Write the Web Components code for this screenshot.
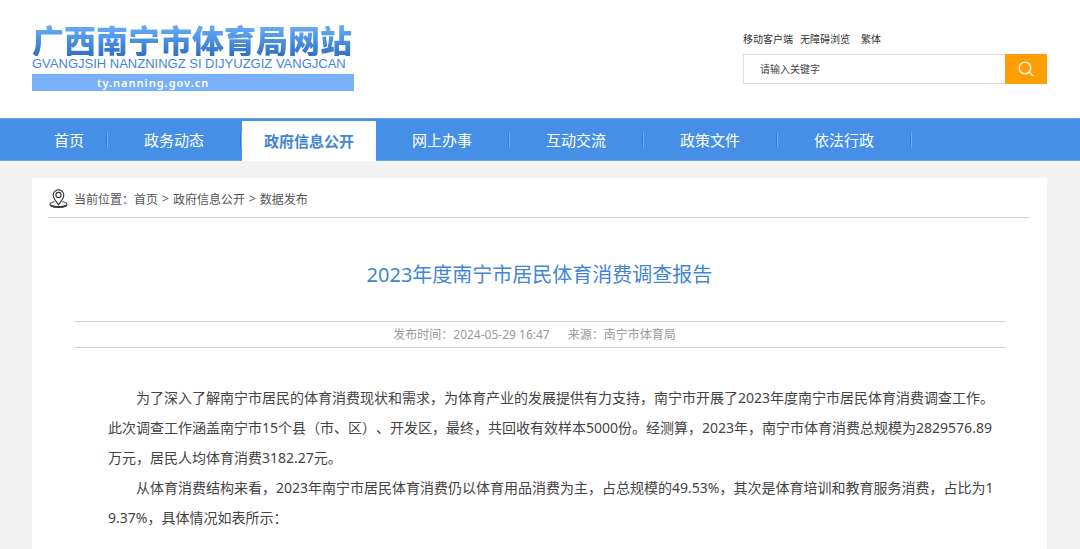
<!DOCTYPE html>
<html lang="zh-CN">
<head>
<meta charset="utf-8">
<meta name="viewport" content="width=device-width, initial-scale=1">
<title>2023年度南宁市居民体育消费调查报告</title>
<style>
  html { background: #f4f4f4; }
  body {
    display: flex;
    flex-direction: column;
    min-height: 100vh;
    margin: 0;
    font-family: "Noto Sans", "Noto Sans CJK SC", sans-serif;
    color: #444;
    --blue: #4590e6;
    --gutter: 32px;
  }
  content-panel { flex: 1; }
</style>
</head>
<body>
<site-header>
  <site-logo slot="logo"></site-logo>
  <a slot="link" href="#app">移动客户端</a>
  <a slot="link" href="#access">无障碍浏览</a>
  <a slot="link" href="#hant">繁体</a>
  <search-box slot="search"></search-box>
</site-header>
<site-nav>
  <nav-item href="#home" compact>首页</nav-item>
  <nav-item href="#news">政务动态</nav-item>
  <nav-item href="#open" active>政府信息公开</nav-item>
  <nav-item href="#service">网上办事</nav-item>
  <nav-item href="#talk">互动交流</nav-item>
  <nav-item href="#policy">政策文件</nav-item>
  <nav-item href="#law">依法行政</nav-item>
</site-nav>
<content-panel>
  <bread-crumb slot="crumb">
    <a href="#home">首页</a>
    <a href="#open">政府信息公开</a>
    <a href="#data">数据发布</a>
  </bread-crumb>
  <news-article>
    <span slot="title">2023年度南宁市居民体育消费调查报告</span>
    <span slot="date">发布时间：2024-05-29 16:47</span>
    <span slot="source">来源：南宁市体育局</span>
    <p>为了深入了解南宁市居民的体育消费现状和需求，为体育产业的发展提供有力支持，南宁市开展了2023年度南宁市居民体育消费调查工作。此次调查工作涵盖南宁市15个县（市、区）、开发区，最终，共回收有效样本5000份。经测算，2023年，南宁市体育消费总规模为2829576.89万元，居民人均体育消费3182.27元。</p>
    <p>从体育消费结构来看，2023年南宁市居民体育消费仍以体育用品消费为主，占总规模的49.53%，其次是体育培训和教育服务消费，占比为19.37%，具体情况如表所示：</p>
  </news-article>
</content-panel>

<script>
const define = (name, html, setup) => {
  const template = document.createElement('template');
  template.innerHTML = html;
  customElements.define(name, class extends HTMLElement {
    constructor() {
      super();
      this.attachShadow({ mode: 'open' }).append(template.content.cloneNode(true));
    }
    connectedCallback() {
      if (setup) setup(this, this.shadowRoot);
    }
  });
};

define('site-logo', `
<style>
  :host { display: inline-block; min-width: 322px; }
  a { display: block; text-decoration: none; white-space: nowrap; }
  .name {
    display: block; font: 900 32px/34px "Noto Sans CJK SC", sans-serif;
    background: linear-gradient(#62a8f6 20%, #3273c8 95%);
    -webkit-background-clip: text; background-clip: text; color: transparent;
  }
  .latin { display: block; font: 13px/16px "Liberation Sans", sans-serif; color: #4586d4; }
  .host {
    display: block; margin-top: 2px; padding-left: 65px; background: #78b1f9; color: #fff;
    font: 600 11px/17px "Noto Sans", sans-serif; letter-spacing: 1px;
  }
</style>
<a href="#home">
  <span class="name">广西南宁市体育局网站</span>
  <span class="latin">GVANGJSIH NANZNINGZ SI DIJYUZGIZ VANGJCAN</span>
  <span class="host">ty.nanning.gov.cn</span>
</a>`);

define('site-header', `
<style>
  :host { display: block; background: #fff; }
  header {
    display: flex; justify-content: space-between; align-items: flex-start;
    padding: 22px 33px 27px var(--gutter);
  }
  .tools { width: 304px; padding-top: 9px; }
  .links { display: flex; gap: 7px; font-size: 10px; line-height: 16px; }
  ::slotted(a) { color: #333; text-decoration: none; }
  ::slotted(a:nth-of-type(3)) { margin-left: 4px; }
  ::slotted(search-box) { margin-top: 7px; }
</style>
<header>
  <slot name="logo"></slot>
  <div class="tools">
    <div class="links"><slot name="link"></slot></div>
    <slot name="search"></slot>
  </div>
</header>`);

define('search-box', `
<style>
  :host { display: block; }
  form { display: flex; height: 30px; margin: 0; }
  input {
    flex: 1; min-width: 0; box-sizing: border-box; padding: 0 16px; border: 1px solid #ddd;
    border-right: 0; border-radius: 0; background: #fff; font: inherit; font-size: 10px; color: #444; outline: 0;
  }
  input::placeholder { color: #444; opacity: 1; }
  button {
    display: grid; place-items: center; width: 42px; padding: 0; border: 0; background: #ff9d04;
  }
</style>
<form role="search">
  <input type="search" placeholder="请输入关键字" aria-label="请输入关键字">
  <button type="button" aria-label="搜索">
    <svg width="16" height="16" viewBox="0 0 16 16" fill="none" stroke="#fff3d8" stroke-width="1.5" stroke-linecap="round">
      <circle cx="7" cy="7" r="5.8"/><path d="M11.2 11.2 15 14.8"/>
    </svg>
  </button>
</form>`);

define('site-nav', `
<style>
  :host { display: block; background: var(--blue); }
  nav {
    display: flex; height: 43px; box-sizing: border-box; padding: 0 var(--gutter);
    border-top: 1px solid #6ba6e4; border-bottom: 1px solid #6ba6e4;
  }
</style>
<nav><slot></slot></nav>`);

define('nav-item', `
<style>
  :host { display: flex; align-items: center; width: 134px; }
  :host([compact]) { width: 76px; }
  a { flex: 1; text-align: center; font-size: 15px; line-height: 40px; color: #fff; text-decoration: none; white-space: nowrap; }
  i { width: 1px; height: 14px; background: #3478cb; border-right: 1px solid #73aff2; }
  :host([active]) { margin: 2px 0 -1px; background: #fff; }
  :host([active]) a { font-weight: 700; color: #4285d6; }
  :host([active]) i { display: none; }
</style>
<a><slot></slot></a><i></i>`, (host, root) => {
  root.querySelector('a').href = host.getAttribute('href');
});

define('content-panel', `
<style>
  :host { display: block; margin: 17px 33px 0 var(--gutter); background: #fff; }
  main { padding: 0 17px; }
</style>
<main><slot name="crumb"></slot><slot></slot></main>`);

define('bread-crumb', `
<style>
  :host { display: block; border-bottom: 1px solid #d2d2d2; }
  nav { display: flex; align-items: center; height: 37px; padding-top: 2px; font-size: 12px; color: #555; }
  svg { margin-right: 6px; }
  .trail { display: flex; gap: 4px; }
  a { color: inherit; text-decoration: none; }
</style>
<nav aria-label="当前位置">
  <svg width="19" height="19" viewBox="0 0 19 19" fill="none" stroke="#333" stroke-width="1.1">
    <path d="M9.5 15.8C7.6 12.6 4.2 9.6 4.2 6.2a5.3 5.3 0 0 1 10.6 0c0 3.4-3.4 6.4-5.3 9.6Z"/>
    <circle cx="9.5" cy="6" r="2.6"/>
    <path d="M5.6 12.8C3 13.2 1 14.2 1 15.4c0 1.6 3.8 2.6 8.5 2.6s8.5-1 8.5-2.6c0-1.2-2-2.200-4.600-2.600"/>
    <path stroke-width="1.8" d="M2 16.5c1.5 1.1 4.300 1.500 7.500 1.500s6-.4 7.500-1.500"/>
  </svg><span>当前位置：</span><span class="trail"></span>
</nav>`, (host, root) => {
  const trail = root.querySelector('.trail');
  trail.replaceChildren();
  [...host.querySelectorAll('a')].forEach((link, i) => {
    if (i) {
      const mark = document.createElement('span');
      mark.textContent = '>';
      trail.append(mark);
    }
    trail.append(link.cloneNode(true));
  });
});

define('news-article', `
<style>
  :host { display: block; }
  h1 { margin: 41px 0 30px; font-size: 20px; line-height: 32px; font-weight: 400; text-align: center; color: #4285d6; }
  .meta {
    display: flex; justify-content: center; gap: 18px; margin: 0 25px; padding-right: 10px;
    font-size: 12px; line-height: 25px;
    color: #999; border-top: 1px solid #d2d2d2; border-bottom: 1px solid #d2d2d2;
  }
  .body { margin: 35px 33px 0 59px; }
  ::slotted(p) {
    margin: 0; font-size: 14px; line-height: 30px; text-indent: 2em;
    word-break: break-all; text-spacing-trim: space-all; color: #444;
  }
</style>
<article>
  <h1><slot name="title"></slot></h1>
  <div class="meta"><slot name="date"></slot><slot name="source"></slot></div>
  <div class="body"><slot></slot></div>
</article>`);
</script>
</body>
</html>
